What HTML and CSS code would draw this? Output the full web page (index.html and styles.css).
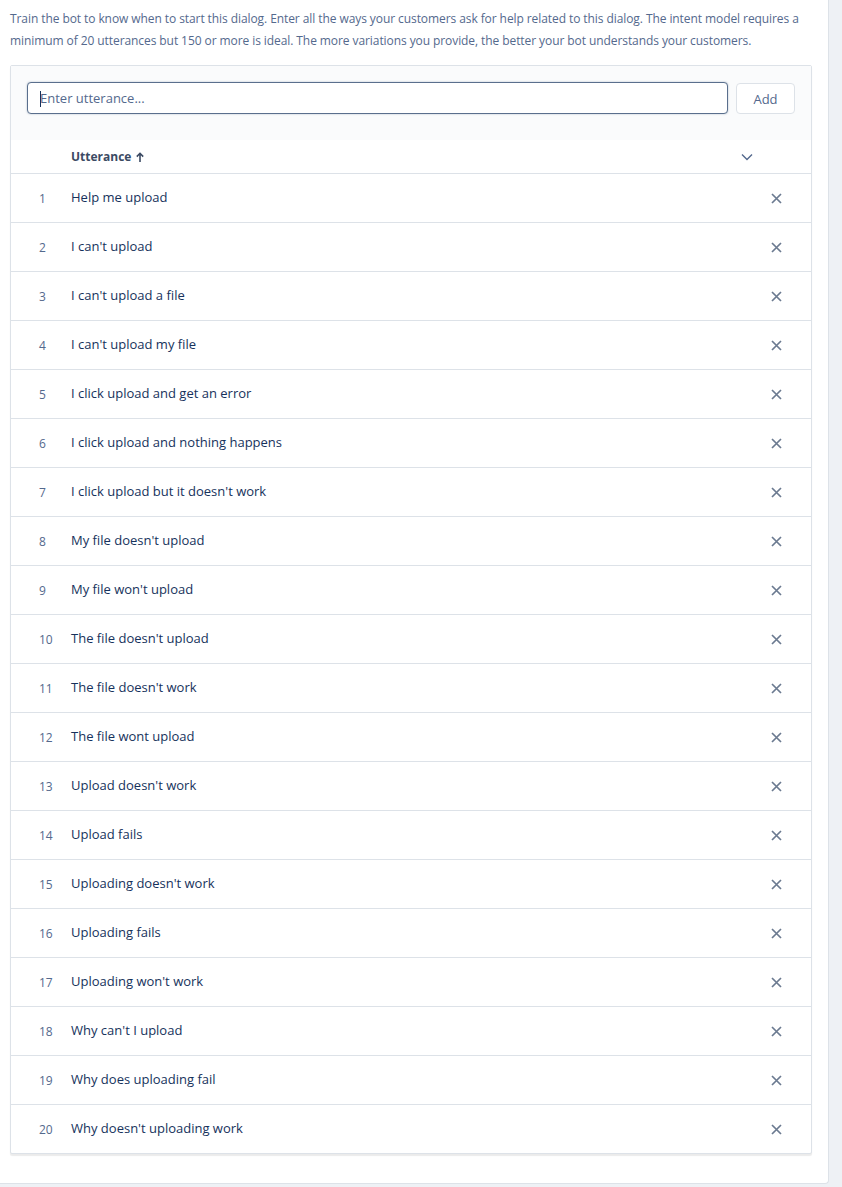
FILE: index.html
```html
<!DOCTYPE html>
<html>
<head>
<meta charset="utf-8">
<link rel="stylesheet" href="styles.css">
</head>
<body>
<div class="page">
  <p class="intro">Train the bot to know when to start this dialog. Enter all the ways your customers ask for help related to this dialog. The intent model requires a minimum of 20 utterances but 150 or more is ideal. The more variations you provide, the better your bot understands your customers.</p>
  <div class="card">
    <div class="toolbar">
      <div class="input"><span class="caret"></span><span class="placeholder">Enter utterance...</span></div>
      <button class="btn">Add</button>
    </div>
    <div class="head">
      <span class="head-label">Utterance <svg class="arrow" width="8" height="10" viewBox="0 0 8 10"><path d="M4 10V1.5M0.8 4.6L4 1.3L7.2 4.6" fill="none" stroke="#3b4a63" stroke-width="1.6"/></svg></span>
      <svg class="chev" width="12" height="8" viewBox="0 0 12 8"><path d="M1 1.5 L6 6.5 L11 1.5" fill="none" stroke="#54698d" stroke-width="1.4"/></svg>
    </div>
    <div class="rows">
      <div class="row"><span class="num">1</span><span class="txt">Help me upload</span><span class="del"><svg width="11" height="11" viewBox="0 0 11 11"><path d="M1 1L10 10M10 1L1 10" stroke="#6b7a90" stroke-width="1.7"/></svg></span></div>
      <div class="row"><span class="num">2</span><span class="txt">I can't upload</span><span class="del"><svg width="11" height="11" viewBox="0 0 11 11"><path d="M1 1L10 10M10 1L1 10" stroke="#6b7a90" stroke-width="1.7"/></svg></span></div>
      <div class="row"><span class="num">3</span><span class="txt">I can't upload a file</span><span class="del"><svg width="11" height="11" viewBox="0 0 11 11"><path d="M1 1L10 10M10 1L1 10" stroke="#6b7a90" stroke-width="1.7"/></svg></span></div>
      <div class="row"><span class="num">4</span><span class="txt">I can't upload my file</span><span class="del"><svg width="11" height="11" viewBox="0 0 11 11"><path d="M1 1L10 10M10 1L1 10" stroke="#6b7a90" stroke-width="1.7"/></svg></span></div>
      <div class="row"><span class="num">5</span><span class="txt">I click upload and get an error</span><span class="del"><svg width="11" height="11" viewBox="0 0 11 11"><path d="M1 1L10 10M10 1L1 10" stroke="#6b7a90" stroke-width="1.7"/></svg></span></div>
      <div class="row"><span class="num">6</span><span class="txt">I click upload and nothing happens</span><span class="del"><svg width="11" height="11" viewBox="0 0 11 11"><path d="M1 1L10 10M10 1L1 10" stroke="#6b7a90" stroke-width="1.7"/></svg></span></div>
      <div class="row"><span class="num">7</span><span class="txt">I click upload but it doesn't work</span><span class="del"><svg width="11" height="11" viewBox="0 0 11 11"><path d="M1 1L10 10M10 1L1 10" stroke="#6b7a90" stroke-width="1.7"/></svg></span></div>
      <div class="row"><span class="num">8</span><span class="txt">My file doesn't upload</span><span class="del"><svg width="11" height="11" viewBox="0 0 11 11"><path d="M1 1L10 10M10 1L1 10" stroke="#6b7a90" stroke-width="1.7"/></svg></span></div>
      <div class="row"><span class="num">9</span><span class="txt">My file won't upload</span><span class="del"><svg width="11" height="11" viewBox="0 0 11 11"><path d="M1 1L10 10M10 1L1 10" stroke="#6b7a90" stroke-width="1.7"/></svg></span></div>
      <div class="row"><span class="num">10</span><span class="txt">The file doesn't upload</span><span class="del"><svg width="11" height="11" viewBox="0 0 11 11"><path d="M1 1L10 10M10 1L1 10" stroke="#6b7a90" stroke-width="1.7"/></svg></span></div>
      <div class="row"><span class="num">11</span><span class="txt">The file doesn't work</span><span class="del"><svg width="11" height="11" viewBox="0 0 11 11"><path d="M1 1L10 10M10 1L1 10" stroke="#6b7a90" stroke-width="1.7"/></svg></span></div>
      <div class="row"><span class="num">12</span><span class="txt">The file wont upload</span><span class="del"><svg width="11" height="11" viewBox="0 0 11 11"><path d="M1 1L10 10M10 1L1 10" stroke="#6b7a90" stroke-width="1.7"/></svg></span></div>
      <div class="row"><span class="num">13</span><span class="txt">Upload doesn't work</span><span class="del"><svg width="11" height="11" viewBox="0 0 11 11"><path d="M1 1L10 10M10 1L1 10" stroke="#6b7a90" stroke-width="1.7"/></svg></span></div>
      <div class="row"><span class="num">14</span><span class="txt">Upload fails</span><span class="del"><svg width="11" height="11" viewBox="0 0 11 11"><path d="M1 1L10 10M10 1L1 10" stroke="#6b7a90" stroke-width="1.7"/></svg></span></div>
      <div class="row"><span class="num">15</span><span class="txt">Uploading doesn't work</span><span class="del"><svg width="11" height="11" viewBox="0 0 11 11"><path d="M1 1L10 10M10 1L1 10" stroke="#6b7a90" stroke-width="1.7"/></svg></span></div>
      <div class="row"><span class="num">16</span><span class="txt">Uploading fails</span><span class="del"><svg width="11" height="11" viewBox="0 0 11 11"><path d="M1 1L10 10M10 1L1 10" stroke="#6b7a90" stroke-width="1.7"/></svg></span></div>
      <div class="row"><span class="num">17</span><span class="txt">Uploading won't work</span><span class="del"><svg width="11" height="11" viewBox="0 0 11 11"><path d="M1 1L10 10M10 1L1 10" stroke="#6b7a90" stroke-width="1.7"/></svg></span></div>
      <div class="row"><span class="num">18</span><span class="txt">Why can't I upload</span><span class="del"><svg width="11" height="11" viewBox="0 0 11 11"><path d="M1 1L10 10M10 1L1 10" stroke="#6b7a90" stroke-width="1.7"/></svg></span></div>
      <div class="row"><span class="num">19</span><span class="txt">Why does uploading fail</span><span class="del"><svg width="11" height="11" viewBox="0 0 11 11"><path d="M1 1L10 10M10 1L1 10" stroke="#6b7a90" stroke-width="1.7"/></svg></span></div>
      <div class="row"><span class="num">20</span><span class="txt">Why doesn't uploading work</span><span class="del"><svg width="11" height="11" viewBox="0 0 11 11"><path d="M1 1L10 10M10 1L1 10" stroke="#6b7a90" stroke-width="1.7"/></svg></span></div>
    </div>
  </div>
</div>
</body>
</html>
```
FILE: styles.css
```css
html, body {
  margin: 0;
  padding: 0;
}
body {
  background: #eef1f5;
  font-family: "Open Sans", "Noto Sans", sans-serif;
  color: #16325c;
  width: 842px;
  height: 1187px;
  overflow: hidden;
}
.page {
  width: 829px;
  height: 1184px;
  box-sizing: border-box;
  background: #fff;
  border-right: 1px solid #dde2e8;
  border-bottom: 1px solid #dde2e8;
  border-bottom-right-radius: 4px;
  padding: 8px 16px 0 10px;
}
.intro {
  margin: 0;
  font-size: 12px;
  line-height: 22px;
  color: #54698d;
  letter-spacing: -0.08px;
}
.card {
  margin-top: 13px;
  width: 802px;
  box-sizing: border-box;
  border: 1px solid #dde2e8;
  border-radius: 2px;
  box-shadow: 0 2px 1px rgba(0, 0, 0, 0.08);
  background: #fff;
}
.toolbar {
  background: #fafbfc;
  display: flex;
  gap: 8px;
  padding: 16px 16px 26px 16px;
  align-items: flex-start;
}
.input {
  position: relative;
  flex: 1;
  height: 32px;
  box-sizing: border-box;
  border: 1px solid #5a6f8d;
  border-radius: 4px;
  background: #fff;
  box-shadow: 0 0 2px rgba(30, 60, 100, 0.35);
  display: flex;
  align-items: center;
  padding-left: 12px;
  font-size: 13px;
  color: #54698d;
}
.caret {
  position: absolute;
  left: 12px;
  top: 8px;
  width: 1px;
  height: 16px;
  background: #16325c;
}
.btn {
  width: 59px;
  height: 31px;
  border: 1px solid #dde2e8;
  border-radius: 4px;
  background: #fff;
  font-family: inherit;
  font-size: 13px;
  color: #54698d;
  padding: 0;
  margin-top: 1px;
}
.head {
  height: 33px;
  display: flex;
  align-items: center;
  justify-content: space-between;
  padding: 0 58px 0 60px;
  border-bottom: 1px solid #dde2e8;
}
.head-label {
  font-size: 12px;
  font-weight: 700;
  color: #3b4a63;
  display: flex;
  align-items: center;
  gap: 5px;
}
.arrow {
  display: block;
}
.chev {
  display: block;
}
.row {
  height: 48px;
  display: grid;
  grid-template-columns: 60px 1fr 70px;
  align-items: center;
  border-bottom: 1px solid #dde2e8;
  font-size: 13px;
}
.row:last-child {
  border-bottom: none;
}
.num {
  padding-left: 28px;
  color: #54698d;
  font-size: 12px;
}
.txt {
  color: #16325c;
  padding-bottom: 2px;
}
.del {
  display: flex;
  justify-content: center;
}
.del svg {
  display: block;
}
```
